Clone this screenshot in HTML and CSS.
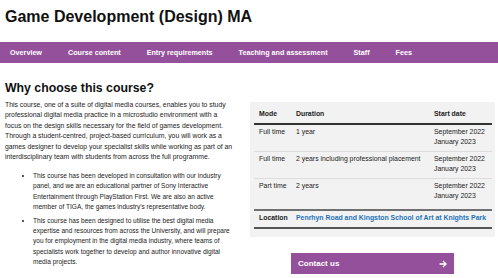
FILE: index.html
```html
<!DOCTYPE html>
<html lang="en">
<head>
  <meta charset="UTF-8">
  <title>Game Development (Design) MA</title>
  <link rel="stylesheet" href="styles.css">
</head>
<body>
  <h1 class="page-title">Game Development (Design) MA</h1>

  <nav class="course-nav">
    <a href="#">Overview</a>
    <a href="#">Course content</a>
    <a href="#">Entry requirements</a>
    <a href="#">Teaching and assessment</a>
    <a href="#">Staff</a>
    <a href="#">Fees</a>
  </nav>

  <div class="overview">
    <div class="intro">
      <h2>Why choose this course?</h2>
      <p>This course, one of a suite of digital media courses, enables you to study professional digital media practice in a microstudio environment with a focus on the design skills necessary for the field of games development. Through a student-centred, project-based curriculum, you will work as a games designer to develop your specialist skills while working as part of an interdisciplinary team with students from across the full programme.</p>
      <ul>
        <li>This course has been developed in consultation with our industry panel, and we are an educational partner of Sony Interactive Entertainment through PlayStation First. We are also an active member of TIGA, the games industry's representative body.</li>
        <li>This course has been designed to utilise the best digital media expertise and resources from across the University, and will prepare you for employment in the digital media industry, where teams of specialists work together to develop and author innovative digital media projects.</li>
      </ul>
    </div>

    <aside class="side">
      <div class="facts">
        <table class="modes">
          <thead>
            <tr><th class="c-mode">Mode</th><th class="c-dur">Duration</th><th>Start date</th></tr>
          </thead>
          <tbody>
            <tr><td>Full time</td><td>1 year</td><td>September 2022<br>January 2023</td></tr>
            <tr><td>Full time</td><td>2 years including professional placement</td><td>September 2022<br>January 2023</td></tr>
            <tr><td>Part time</td><td>2 years</td><td>September 2022<br>January 2023</td></tr>
          </tbody>
        </table>
        <div class="location">
          <span class="label">Location</span>
          <a href="#">Penrhyn Road and Kingston School of Art at Knights Park</a>
        </div>
      </div>
      <a class="contact-btn" href="#">Contact us
        <svg class="arrow" width="8" height="8" viewBox="0 0 8 8"><path d="M0.5 4H7M4 1L7 4L4 7" fill="none" stroke="#fff" stroke-width="1.4"/></svg>
      </a>
    </aside>
  </div>
</body>
</html>
```

FILE: styles.css
```css
body {
  font-family: 'Liberation Sans', Arial, sans-serif;
  color: #222;
  margin: 0;
  background: #fff;
}
.page-title {
  font-size: 16px;
  margin: 0;
  padding: 8px 5px 0;
  height: 42px;
  box-sizing: border-box;
  color: #111;
}
.course-nav {
  display: flex;
  gap: 26px;
  background: #95509b;
  height: 21px;
  align-items: center;
  padding: 0 10px;
}
.course-nav a {
  color: #fff;
  font-weight: bold;
  font-size: 7.2px;
  text-decoration: none;
}
.overview {
  display: flex;
  gap: 16px;
  padding: 0 3px 0 5px;
}
.intro {
  width: 229px;
  flex-shrink: 0;
}
.intro h2 {
  font-size: 12.3px;
  line-height: 14px;
  margin: 17.5px 0 5px;
  color: #111;
}
.intro p {
  font-size: 6.85px;
  line-height: 10.5px;
  margin: 0 0 8.5px;
}
.intro ul {
  margin: 0;
  padding: 0 0 0 28px;
  font-size: 6.55px;
  line-height: 10.3px;
}
.intro li {
  margin-bottom: 3.7px;
}
.side {
  width: 245px;
  flex-shrink: 0;
  padding-top: 39px;
}
.facts {
  background: #f2f2f2;
  padding: 0 3px 8px 4px;
}
.modes {
  width: 100%;
  table-layout: fixed;
  border-collapse: collapse;
  font-size: 6.9px;
  line-height: 10px;
  white-space: nowrap;
}
.modes th {
  text-align: left;
  padding: 7px 0 4px;
  border-bottom: 2px solid #333;
}
.modes td {
  vertical-align: top;
  padding: 2px 0 4px;
  border-bottom: 1px solid #ddd;
}
.modes th:first-child, .modes td:first-child {
  padding-left: 5px;
}
.modes .c-mode {
  width: 37px;
}
.modes .c-dur {
  width: 138px;
}
.modes tbody tr:last-child td {
  padding-bottom: 8px;
  border-bottom: 2px solid #707070;
}
.location {
  display: flex;
  font-size: 6.9px;
  line-height: 10px;
  font-weight: bold;
  white-space: nowrap;
  padding: 2px 0 4px 5px;
  border-bottom: 2px solid #555;
}
.location .label {
  width: 37px;
  flex-shrink: 0;
}
.location a {
  color: #1f72b8;
  text-decoration: none;
}
.contact-btn {
  display: flex;
  justify-content: space-between;
  align-items: center;
  width: 163px;
  height: 21px;
  box-sizing: border-box;
  margin: 16px auto 0;
  padding: 0 7px 0 7px;
  background: #95509b;
  color: #fff;
  font-weight: bold;
  font-size: 8px;
  text-decoration: none;
}
```
